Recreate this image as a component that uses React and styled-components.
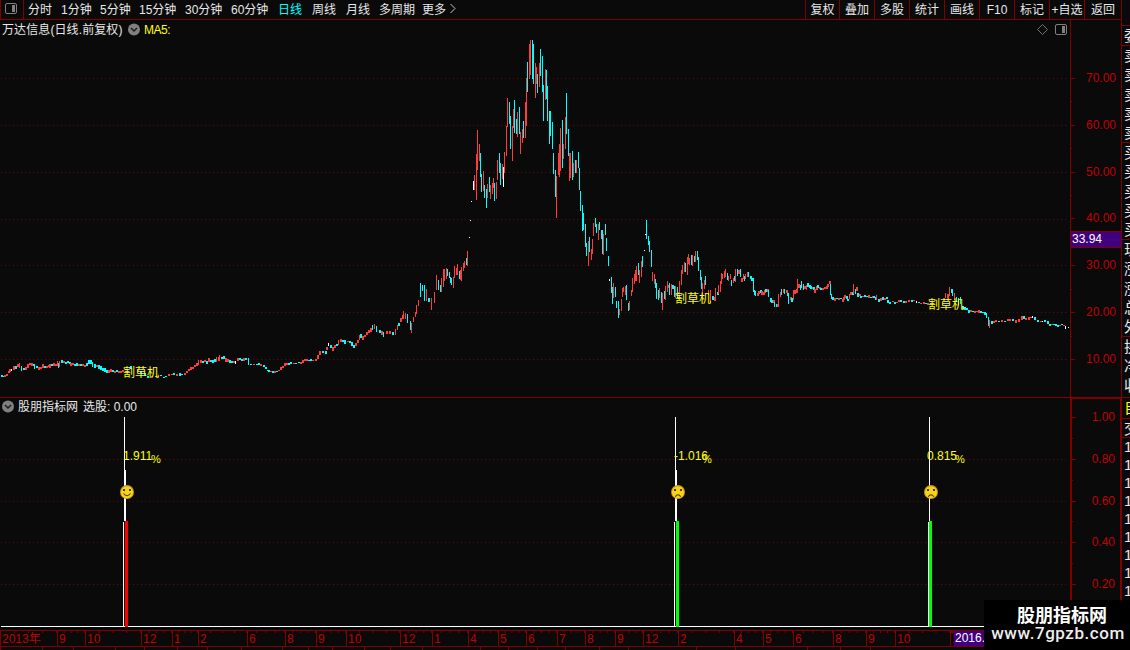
import styled, { createGlobalStyle, css } from "styled-components"

const GlobalStyle = createGlobalStyle`
  * {
    box-sizing: border-box;
  }

  body {
    margin: 0;
    background: #0a0a0a;
    overflow: hidden;
  }
`

const line = "#800000"
const numberRed = "#c00000"
const candleColors = { r: "#ff3c3c", c: "#00ffff", w: "#ffffff" }

// Page
const Page = styled.main`
  position: relative;
  display: flex;
  width: 1130px;
  height: 650px;
  overflow: hidden;
  background: #0a0a0a;
  color: #e8e8e8;
  font: 12px/14px "Liberation Sans", "Noto Sans CJK SC", sans-serif;
  white-space: nowrap;
`

const Workspace = styled.section`
  display: flex;
  flex-direction: column;
  width: 1121px;
`

// Toolbar
const Toolbar = styled.nav`
  display: flex;
  height: 20px;
  border-bottom: 1px solid ${line};
`

const LayoutButton = styled.button`
  display: grid;
  place-content: center;
  width: 24px;
  padding: 0 2px 2px 0;
  background: none;
  border: solid ${line};
  border-width: 0 1px;
`

const PeriodList = styled.div`
  display: flex;
  flex: 1;
  padding: 3px 0 0 4px;
`

const Period = styled.span`
  width: ${(props) => props.$width}px;
  color: ${(props) => (props.$active ? "#00ffff" : "#e8e8e8")};
`

const ToolButton = styled.span`
  width: ${(props) => props.$width || 35}px;
  padding-top: 3px;
  border-left: 1px solid ${line};
  text-align: center;
`

// Chart panes
const MainRow = styled.section`
  display: flex;
  height: 378px;
  border-bottom: 1px solid ${line};
`

const SubRow = styled.section`
  display: flex;
  height: 232px;
`

const Pane = styled.div`
  width: 1070px;

  > svg {
    display: block;
  }
`

const PaneHeader = styled.header`
  display: flex;
  height: ${(props) => props.$height}px;
  padding: ${(props) => props.$padding};

  svg {
    flex: none;
  }
`

const Title = styled.span`
  width: ${(props) => props.$width}px;
  flex: none;
  padding-left: ${(props) => props.$indent || 0}px;
  letter-spacing: ${(props) => props.$spacing || 0}px;
`

const Indicator = styled.span`
  flex: 1;
  padding-left: 4px;
  color: #ffff00;
  letter-spacing: -0.5px;
`

const HeaderIcons = styled.span`
  display: flex;
  gap: 7px;
  padding: 1px 3px 0 0;
`

const Axis = styled.aside`
  position: relative;
  width: 51px;
  border-left: 1px solid ${line};
  padding-top: ${(props) => props.$top}px;
  color: ${numberRed};

  ${(props) =>
    props.$boxed &&
    css`
      border: solid ${line};
      border-width: 1px 1px 0 2px;
    `}
`

const Scale = styled.div`
  position: relative;
  height: ${(props) => props.$step}px;
  padding-right: 5px;
  text-align: right;

  &::before,
  &::after {
    content: "";
    position: absolute;
    left: 0;
    top: 7px;
    width: 4px;
    height: 1px;
    background: ${line};
  }

  &::after {
    top: ${(props) => 7 + props.$step / 2}px;
    width: ${(props) => (props.$last ? 0 : 1)}px;
  }
`

const PriceBadge = styled.span`
  position: absolute;
  left: 0;
  top: 211px;
  width: 50px;
  height: 17px;
  padding-left: 1px;
  background: #400080;
  border: solid ${line};
  border-width: 1px 0;
  color: #ffffff;
`

// Date axis
const DateAxis = styled.footer`
  display: flex;
  height: 17px;
  border: solid ${line};
  border-width: 1px 0;
  color: ${numberRed};
`

const Month = styled.span`
  width: ${(props) => props.$width}px;
  flex: none;
  overflow: hidden;
  padding: 1px 0 0 1px;
  border-left: 1px solid ${line};
  background: linear-gradient(90deg, transparent calc(100% - 1px), ${line} 0) 0 0 / 25% 2px repeat-x;
`

const CurrentDate = styled.span`
  flex: 1;
  padding-left: 1px;
  background: #400080;
  color: #ffffff;
`

const BottomTabs = styled.div`
  display: flex;
  height: 3px;
`

const BottomTab = styled.span`
  width: ${(props) => props.$width}px;
  border-left: 1px solid ${line};
`

// Quote strip, cut off by the window edge
const QuoteStrip = styled.aside`
  width: 9px;
  overflow: hidden;
  border-left: 1px solid ${line};
  padding-top: 25px;
`

const QuoteGroup = styled.div`
  height: ${(props) => props.$height}px;
  border-top: 1px solid ${line};
  padding-left: 2px;
  font-size: 15px;
  line-height: ${(props) => props.$row || 19.3}px;
  color: ${(props) => props.$color || "#e8e8e8"};
`

const QuoteCell = styled.div`
  overflow: hidden;
`

// Watermark
const Watermark = styled.div`
  position: absolute;
  right: 0;
  bottom: 0;
  width: 146px;
  height: 50px;
  padding: 3px 0 0 10px;
  background: #000000;
  text-align: center;
`

const SiteName = styled.div`
  font: bold 18px/22px "Noto Sans CJK SC", sans-serif;
  color: #ffffff;
`

const SiteUrl = styled.div`
  margin-left: -8px;
  font: 500 17px/17px Roboto, sans-serif;
  letter-spacing: 0.55px;
  color: #eeeeee;
`

const periods = [
  ["分时", 33],
  ["1分钟", 39],
  ["5分钟", 39],
  ["15分钟", 46],
  ["30分钟", 46],
  ["60分钟", 47],
  ["日线", 34],
  ["周线", 34],
  ["月线", 33],
  ["多周期", 43],
  ["更多", 28],
]

const tools = ["复权", "叠加", "多股", "统计", "画线", "F10", "标记", "+自选", "返回"]

const months = [
  ["2013年", 57], ["9", 28], ["10", 56], ["12", 31], ["1", 26], ["2", 49], ["6", 38], ["8", 31],
  ["9", 30], ["10", 54], ["12", 32], ["1", 36], ["4", 30], ["5", 28], ["6", 31], ["7", 28],
  ["8", 30], ["9", 28], ["12", 35], ["2", 56], ["4", 29], ["5", 30], ["6", 40], ["8", 33],
  ["9", 29], ["10", 55], ["1", 4],
]

const tabWidths = [42, 31, 42, 29, 33, 30, 34, 41, 26, 24, 32, 26, 32, 58, 28, 29, 28, 34, 29, 68, 39, 72, 33, 30, 200]

const quotes = [
  { height: 20, rows: ["委"] },
  { height: 97, rows: ["卖", "卖", "卖", "卖", "卖"] },
  { height: 97, rows: ["买", "买", "买", "买", "买"] },
  { height: 97, rows: ["现", "涨", "涨", "总", "外"] },
  { height: 61, rows: ["换", "净", "收"] },
  { height: 21, rows: ["自"], color: "#ffff00" },
  { height: 19, rows: ["交"] },
  { height: 180, rows: ["1", "1", "1", "1", "1", "1", "1", "1", "1"], row: 18 },
]

// x, high, low, colour
const candles = `
1 375 377 c,3 376 377 c,4 375 377 r,6 374 376 r,8 371 373 r,9 369 372 r,11 369 371 w,13 366 370 r,15 366 369 c,17 364 367 r,
19 363 368 r,21 366 371 c,23 368 370 c,25 367 370 r,27 364 368 r,29 363 365 r,31 363 366 r,33 364 366 c,34 364 369 c,36 366 368 c,
38 367 370 r,40 367 369 r,42 364 368 r,44 366 368 c,46 366 368 r,48 365 367 r,49 364 368 r,51 364 366 c,53 363 366 r,55 364 366 r,
57 361 366 r,58 363 368 c,59 361 367 r,61 360 363 c,63 361 363 r,65 362 364 c,67 361 363 c,69 362 364 c,70 363 366 r,72 363 365 r,
74 364 366 c,76 363 366 c,78 364 366 r,80 364 366 c,82 364 366 r,84 365 367 r,86 363 366 c,88 360 364 c,90 360 364 c,92 362 367 c,
94 364 368 c,96 365 367 r,98 365 369 c,100 366 370 c,102 368 371 c,104 368 372 c,106 370 373 c,108 370 373 r,110 369 372 r,
112 370 372 c,114 371 373 r,116 370 372 c,118 371 373 r,120 371 373 r,122 370 372 r,130 366 369 c,137 369 371 r,140 371 374 c,
144 373 376 c,147 376 378 c,151 376 377 r,155 376 377 c,157 376 377 r,160 375 376 c,163 377 378 c,165 376 377 c,168 374 376 r,
171 374 375 r,173 373 375 c,176 374 376 r,179 373 376 c,181 374 375 c,184 373 375 r,186 371 373 r,188 369 371 r,190 367 370 r,
192 367 369 r,194 365 367 r,196 363 366 r,198 360 365 r,200 360 363 r,202 361 363 c,204 360 362 r,206 361 364 c,208 358 362 r,
210 360 362 c,212 360 363 c,214 359 362 c,216 357 362 r,218 357 361 r,219 355 361 r,221 357 359 c,223 356 359 c,225 358 362 r,
227 359 362 r,229 360 363 c,231 361 363 c,233 361 363 r,235 361 364 w,237 358 361 r,239 358 360 c,241 359 361 c,243 358 361 r,
245 358 360 c,248 358 365 c,250 364 365 c,253 364 365 r,256 364 365 c,258 363 365 c,260 364 366 r,263 365 367 c,265 367 369 c,
267 370 371 c,268 370 372 c,270 371 372 r,272 371 373 c,274 371 373 r,276 371 372 c,278 370 371 r,280 367 370 r,282 366 368 r,
284 363 366 r,286 363 365 r,288 363 365 c,290 362 364 c,293 363 364 r,295 363 364 c,298 362 363 c,300 362 364 r,302 360 363 r,
304 359 361 r,306 359 361 r,308 360 361 c,310 359 361 c,312 360 361 r,315 359 361 r,317 355 359 r,319 351 355 r,322 351 353 c,
325 351 354 c,326 347 350 r,328 343 346 w,330 345 348 c,332 347 351 r,334 345 348 r,336 344 346 c,338 340 345 r,340 339 342 r,
342 340 342 c,344 340 344 c,347 341 342 r,349 341 343 c,351 342 346 c,353 345 348 c,355 343 346 r,357 340 343 r,359 335 340 r,
360 334 338 c,362 336 340 r,364 335 337 r,366 332 335 r,368 330 333 r,370 328 332 r,372 325 330 c,374 324 329 r,376 326 332 c,
379 330 333 c,381 331 335 r,383 332 337 c,386 331 334 r,389 331 334 r,392 332 335 c,395 329 335 r,397 325 330 r,398 323 326 c,
400 318 322 r,402 315 319 r,403 311 317 r,405 313 319 r,407 314 323 c,410 321 330 c,411 323 333 r,413 317 322 r,415 312 317 r,
416 305 314 r,418 300 306 r,420 283 297 c,422 285 291 c,424 285 301 c,426 289 301 r,428 298 302 c,431 298 310 r,434 292 303 r,
436 275 290 r,438 280 290 c,440 285 292 c,441 278 292 r,443 269 287 r,444 269 281 r,446 268 279 r,447 269 276 c,449 272 278 c,
450 277 283 c,451 278 285 c,453 277 288 r,454 266 278 r,456 268 275 r,457 264 275 r,459 271 279 c,460 270 280 r,461 267 281 r,
463 263 271 r,464 261 268 r,466 258 265 c,467 251 266 r,469 237 238 w,470 220 221 w,471 201 202 w,473 181 190 w,474 175 190 r,
476 154 200 r,477 130 170 r,479 144 161 r,480 153 177 c,481 174 192 c,483 171 191 r,484 185 198 c,486 189 208 c,487 184 198 r,
489 177 192 c,490 185 199 r,492 183 194 r,493 178 188 r,494 183 201 c,496 182 199 r,497 160 180 r,499 153 173 c,500 163 185 c,
502 164 179 r,503 167 187 w,504 152 173 r,506 126 156 r,507 98 127 r,509 102 124 c,510 116 149 c,512 126 161 r,513 109 128 r,
514 100 133 c,516 119 134 c,517 112 137 r,519 107 134 c,520 132 154 r,522 129 143 r,523 121 138 c,525 102 138 r,526 78 126 r,
527 62 92 c,529 44 79 r,530 40 75 r,532 40 79 c,533 44 84 c,535 63 98 r,536 67 84 r,537 74 93 c,539 63 87 r,540 49 76 c,
542 56 92 c,543 85 121 c,545 69 100 r,546 70 99 c,547 86 121 c,549 111 144 c,550 111 136 c,552 122 149 c,553 153 174 c,
555 170 197 c,556 176 218 r,558 153 175 r,559 144 177 r,560 128 171 r,562 120 168 c,563 144 159 r,565 117 149 r,566 93 134 c,
568 129 156 c,569 153 181 r,570 153 178 r,572 151 180 c,573 163 177 r,575 160 173 c,576 160 173 r,578 152 168 c,579 168 190 c,
580 191 211 c,582 205 231 c,583 213 230 c,585 224 247 c,586 243 256 c,588 241 266 r,589 237 252 c,591 249 260 r,592 239 254 r,
593 223 236 r,595 218 227 c,596 224 233 c,598 224 240 r,599 222 230 c,601 230 239 c,602 230 254 c,603 234 255 r,605 224 235 c,
606 238 251 c,608 256 266 c,609 279 281 w,611 277 293 c,612 287 304 c,613 283 298 r,615 287 297 c,616 301 308 c,618 301 318 c,
619 309 315 r,621 299 311 r,622 288 297 r,623 287 292 r,625 286 295 r,626 285 300 c,628 303 311 c,629 301 310 r,631 290 296 r,
632 278 292 r,634 274 284 r,635 270 281 r,636 266 281 r,638 263 275 c,639 270 283 r,641 261 277 r,642 256 267 c,644 250 251 w,
645 234 235 w,646 220 239 c,648 236 245 c,649 241 252 c,651 250 267 c,652 272 281 r,654 274 284 r,655 279 288 c,656 283 299 c,
658 290 300 c,659 288 298 r,661 292 303 c,662 293 310 r,664 291 299 c,665 286 300 r,667 281 292 r,668 285 288 r,669 283 295 c,
671 284 295 r,672 285 289 c,674 286 297 c,675 286 298 r,677 287 298 c,679 281 292 r,681 270 285 r,682 265 274 r,684 262 272 r,
685 263 272 c,687 257 275 r,688 254 264 r,689 258 265 r,691 255 265 c,692 255 266 r,694 256 262 c,695 251 262 r,697 251 260 c,
698 257 271 c,700 270 280 c,701 277 289 c,702 283 300 r,704 280 289 r,705 276 285 c,708 290 295 r,710 290 303 r,712 296 300 c,
714 297 301 r,715 288 297 r,717 292 295 c,718 285 294 r,720 281 292 r,721 273 284 r,722 274 279 r,724 271 278 r,725 269 277 r,
727 273 280 c,728 276 281 r,730 274 279 r,731 280 286 c,733 278 283 r,734 276 281 c,735 269 282 r,737 269 276 c,738 270 274 r,
740 269 277 c,741 278 282 r,743 274 279 r,744 276 281 c,745 274 279 r,747 272 277 r,748 272 277 c,750 276 279 c,751 278 281 c,
753 278 292 c,754 290 295 c,755 291 296 c,757 293 296 r,758 291 294 r,760 290 293 c,761 291 295 r,763 292 295 r,764 290 293 r,
765 289 292 c,767 289 292 r,768 290 297 c,770 298 302 c,771 300 303 c,773 300 303 r,774 302 307 c,776 304 307 c,777 304 307 r,
778 294 306 r,780 292 297 r,781 289 295 c,783 289 293 r,784 289 294 c,786 290 293 r,787 293 296 c,788 295 304 c,790 297 300 r,
791 298 302 c,793 290 300 r,794 290 294 r,796 289 293 r,797 279 293 r,798 284 288 r,800 285 290 c,801 281 288 c,803 284 290 c,
804 286 289 r,806 285 290 r,807 283 287 c,809 285 288 c,810 286 289 c,812 287 289 r,813 287 290 c,814 289 293 r,816 286 290 r,
817 285 288 c,819 287 289 r,820 288 290 c,822 288 290 r,824 287 289 r,826 286 289 r,827 284 287 r,829 281 284 r,830 284 295 c,
831 294 299 c,832 297 300 c,834 298 301 r,836 298 299 c,838 298 300 r,840 298 299 c,842 299 302 r,843 297 300 r,844 295 298 r,
846 296 299 c,847 299 301 c,849 294 299 r,850 292 295 r,852 292 295 c,853 284 294 r,855 289 294 c,856 287 291 r,857 293 297 c,
859 294 296 r,860 296 298 c,862 296 297 r,864 295 297 c,866 296 297 c,868 295 298 r,870 297 298 c,872 296 298 r,873 296 298 c,
875 297 300 c,876 295 300 r,878 299 302 c,880 298 301 r,882 297 300 c,884 298 300 r,886 297 299 c,887 300 303 c,889 302 304 c,
892 301 302 r,894 302 304 c,896 302 303 r,898 300 302 r,900 300 302 c,903 301 303 c,905 301 303 r,908 300 302 r,911 300 302 c,
913 300 301 r,916 301 303 w,918 302 303 c,920 303 304 r,923 302 304 r,925 303 304 c,927 303 305 r,945 293 298 r,947 294 298 r,
949 287 296 r,951 289 293 c,952 290 296 c,954 293 300 r,956 297 302 c,958 298 305 c,960 297 304 c,962 306 309 c,964 307 310 c,
966 308 310 c,968 310 313 c,970 310 312 r,972 311 312 c,974 311 313 r,976 311 312 r,978 310 313 r,980 311 313 c,982 312 313 c,
984 312 315 c,986 313 318 c,988 317 326 c,989 320 328 r,991 321 324 c,993 321 323 r,995 320 322 r,998 321 322 c,1001 320 322 r,
1004 321 322 c,1007 319 321 r,1009 319 321 r,1012 319 321 c,1015 320 323 r,1018 319 322 r,1021 316 320 r,1023 316 319 c,
1025 318 320 r,1028 317 320 r,1030 317 318 r,1032 316 318 w,1034 317 320 c,1037 320 322 c,1040 321 322 r,1042 321 322 w,
1044 320 322 c,1047 321 324 c,1049 324 326 c,1051 324 325 r,1053 324 325 c,1055 324 326 c,1057 325 327 c,1059 325 326 r,
1061 324 325 c,1063 325 326 r,1065 326 329 w,1068 327 328 w`
  .split(",")
  .map((entry) => entry.trim().split(" "))

// flat days show mostly as the open and close marks, so they are drawn wider
const candleWidth = (range, color) => (range <= 4 && color !== "w" ? 2 : 1)

const mowers = [
  [123, 377],
  [675, 303],
  [928, 309],
]

const signals = [
  { x: 124, label: "1.911", labelX: 123, percentX: 151, faceX: 127, thick: true, color: "#ff0000", barX: 125, happy: true },
  { x: 675, label: "-1.016", labelX: 674, percentX: 702, faceX: 678, thick: true, color: "#00ff00", barX: 676 },
  { x: 929, label: "0.815", labelX: 927, percentX: 955, faceX: 931, color: "#00ff00", barX: 929 },
]

const GridLine = ({ y }) => (
  <line x1="1" x2="1067" y1={y + 0.5} y2={y + 0.5} stroke="#600808" strokeDasharray="1 3" />
)

const CollapseIcon = () => (
  <svg width="12" height="14" viewBox="0 0 12 14">
    <circle cx="6" cy="6.5" r="6" fill="#808080" />
    <path d="M3 5l3 3 3-3" fill="none" stroke="#1c1c1c" strokeWidth="1.5" />
  </svg>
)

const PanelIcon = () => (
  <svg width="12" height="11" viewBox="0 0 12 11">
    <rect x="0.5" y="0.5" width="11" height="10" rx="1.5" fill="none" stroke="#808080" />
    <rect x="7" y="2" width="3" height="7" fill="#808080" />
  </svg>
)

const Face = ({ x, happy }) => (
  <g transform={`translate(${x} 492)`}>
    <circle r="7" fill="#c99a0c" />
    <circle r="6" cy="0.3" fill="#f6d21c" />
    <rect x="-4" y="-3" width="2" height="2" fill="#4a3a00" />
    <rect x="2" y="-3" width="2" height="2" fill="#4a3a00" />
    <path d={happy ? "M-3.5 1.5Q0 6 3.5 1.5" : "M-2.8 4.8Q0 0.8 2.8 4.8"} fill="none" stroke="#4a3a00" strokeWidth="1.1" />
  </g>
)

const PriceChart = () => (
  <svg width="1070" height="357" viewBox="0 40 1070 357">
    {[78, 125, 172, 219, 265, 312, 359].map((y) => (
      <GridLine key={y} y={y} />
    ))}
    <g shapeRendering="crispEdges">
      {candles.map(([x, high, low, color]) => (
        <rect key={x} x={x} y={high} width={candleWidth(low - high, color)} height={low - high} fill={candleColors[color]} />
      ))}
    </g>
    {mowers.map(([x, y]) => (
      <text key={x} x={x} y={y} fill="#ffff00">割草机</text>
    ))}
  </svg>
)

const SignalChart = () => (
  <svg width="1070" height="214" viewBox="0 416 1070 214">
    {[459, 501, 542, 584].map((y) => (
      <GridLine key={y} y={y} />
    ))}
    <rect x="1" y="626" width="1069" height="1" fill="#ffffff" />
    {signals.map((signal) => (
      <g key={signal.x}>
        <rect x={signal.x} y="417" width="1" height="104" fill="#ffffff" />
        {signal.thick && <rect x={signal.x} y="470" width="2" height="51" fill="#ffffff" />}
        <rect x={signal.x - 1} y="522" width="1" height="105" fill="#ffffff" />
        <rect x={signal.barX} y="521" width="3" height="106" fill={signal.color} />
        <Face x={signal.faceX} happy={signal.happy} />
        <text x={signal.labelX} y="460" fill="#ffff00">{signal.label}</text>
        <text x={signal.percentX} y="463" fill="#ffff00" fontSize="11">%</text>
      </g>
    ))}
  </svg>
)

function App() {
  return (
    <>
      <GlobalStyle />
      <Page>
        <Workspace>
          <Toolbar>
            <LayoutButton><PanelIcon /></LayoutButton>
            <PeriodList>
              {periods.map(([name, width]) => (
                <Period key={name} $width={width} $active={name === "日线"}>{name}</Period>
              ))}
              <svg width="6" height="12" viewBox="0 0 6 12">
                <path d="M0.5 1l4.5 4.5-4.5 4.5" fill="none" stroke="#c8c8c8" />
              </svg>
            </PeriodList>
            {tools.map((name, index) => (
              <ToolButton key={name} $width={index === 0 ? 34 : index === 8 ? 37 : 35}>{name}</ToolButton>
            ))}
          </Toolbar>

          <MainRow>
            <Pane>
              <PaneHeader $height={20} $padding="3px 0 0 2px">
                <Title $width={126} $spacing={0.1}>万达信息(日线.前复权)</Title>
                <CollapseIcon />
                <Indicator>MA5:</Indicator>
                <HeaderIcons>
                  <svg width="11" height="12" viewBox="0 0 11 12">
                    <path d="M5.5 0.5l5 5-5 5-5-5z" fill="none" stroke="#707070" />
                  </svg>
                  <PanelIcon />
                </HeaderIcons>
              </PaneHeader>
              <PriceChart />
            </Pane>
            <Axis $top={51}>
              {["70.00", "60.00", "50.00", "40.00", "30.00", "20.00", "10.00"].map((value) => (
                <Scale key={value} $step={46.83} $last={value === "10.00"}>{value}</Scale>
              ))}
              <PriceBadge>33.94</PriceBadge>
            </Axis>
          </MainRow>

          <SubRow>
            <Pane>
              <PaneHeader $height={18} $padding="2px 0 0 2px">
                <CollapseIcon />
                <Title $width={69} $indent={4}>股朋指标网</Title>
                <Title>选股: 0.00</Title>
              </PaneHeader>
              <SignalChart />
            </Pane>
            <Axis $boxed $top={11}>
              {["1.00", "0.80", "0.60", "0.40", "0.20"].map((value) => (
                <Scale key={value} $step={41.78} $last={value === "0.20"}>{value}</Scale>
              ))}
            </Axis>
          </SubRow>

          <DateAxis>
            {months.map(([name, width], index) => (
              <Month key={index} $width={width}>{name}</Month>
            ))}
            <CurrentDate>2016.</CurrentDate>
          </DateAxis>
          <BottomTabs>
            {tabWidths.map((width, index) => (
              <BottomTab key={index} $width={width} />
            ))}
          </BottomTabs>
        </Workspace>

        <QuoteStrip>
          {quotes.map((group, index) => (
            <QuoteGroup key={index} $height={group.height} $color={group.color} $row={group.row}>
              {group.rows.map((row, rowIndex) => (
                <QuoteCell key={rowIndex}>{row}</QuoteCell>
              ))}
            </QuoteGroup>
          ))}
        </QuoteStrip>

        <Watermark>
          <SiteName>股朋指标网</SiteName>
          <SiteUrl>www.7gpzb.com</SiteUrl>
        </Watermark>
      </Page>
    </>
  )
}

export default App
